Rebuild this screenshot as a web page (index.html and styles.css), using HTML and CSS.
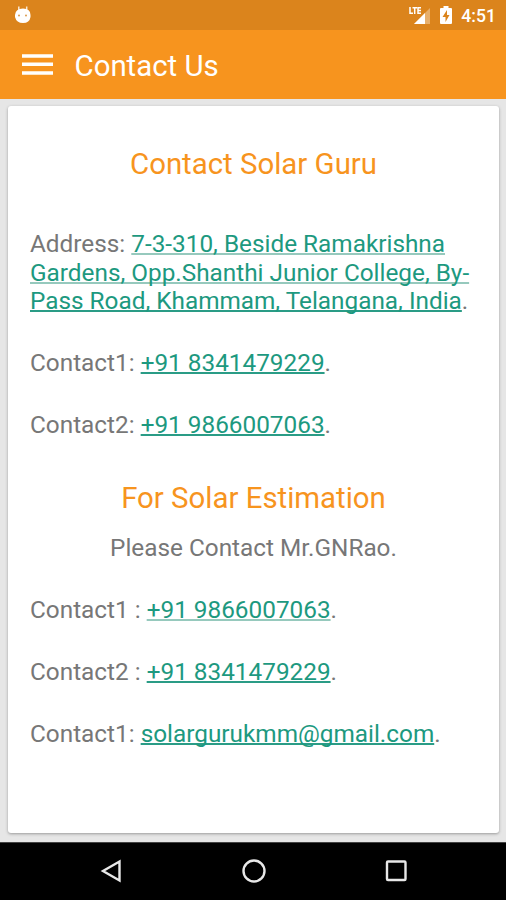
FILE: index.html
```html
<!DOCTYPE html>
<html lang="en"><head><meta charset="utf-8"><title>Contact Us</title><link rel="stylesheet" href="styles.css"></head>
<body>
<header class="status">
<svg class="droid" viewBox="0 0 18 20"><path d="M4.8 1.5V5M12.7 1.5V5" stroke="#fff" stroke-opacity=".8" stroke-width="1.5"/><path d="M1 10Q1.5 3.5 9 3.5T16.500 10V12Q15.500 18 9 18T1 12Z" fill="#fff"/><circle cx="5" cy="10.500" r="1" fill="#db9a4d"/><circle cx="12" cy="10.500" r="1" fill="#db9a4d"/></svg>
<div class="indicators">
<svg class="signal" viewBox="0 0 24 20"><path d="M6 19L22 3V19Z" fill="#fff" fill-opacity=".35"/><path d="M6 19L17 8V19Z" fill="#fff"/><path d="M2 2V8.300H5M4.500 2.700H9M6.700 2V9M13 2.700H10V8.300H13M10 5.500H13" fill="none" stroke="#fff" stroke-width="1.5"/></svg>
<svg class="battery" viewBox="0 0 12 18"><path d="M3.500 2V0H8.500V2H11Q12 2 12 3V17Q12 18 11 18H1Q0 18 0 17V3Q0 2 1 2Z" fill="#fff"/><path d="M7 4L2.500 11H5.500V16L9.500 9H7Z" fill="#db841c"/></svg>
<span class="clock">4:51</span></div>
</header>
<nav class="bar"><svg class="menu" viewBox="0 0 31 22"><path d="M0 2H31M0 10.300H31M0 19H31" stroke="#fff" stroke-width="3.600"/></svg><h1>Contact Us</h1></nav>
<main><section class="card">
<h2>Contact Solar Guru</h2>
<p class="address">Address: <a class="soft">7-3-310, Beside Ramakrishna</a><br><a class="soft">Gardens, Opp.Shanthi Junior College, By-</a><br><a>Pass Road, Khammam, Telangana, India</a>.</p>
<p>Contact1: <a>+91 8341479229</a>.</p>
<p>Contact2: <a>+91 9866007063</a>.</p>
<h2 class="second">For Solar Estimation</h2>
<p class="person">Please Contact Mr.GNRao.</p>
<p>Contact1 : <a class="soft">+91 9866007063</a>.</p>
<p>Contact2 : <a>+91 8341479229</a>.</p>
<p>Contact1: <a>solargurukmm@gmail.com</a>.</p>
</section></main>
<footer><svg viewBox="0 0 24 24"><path d="M20.500 2.500V21.500L4 12Z"/></svg><svg viewBox="0 0 24 24"><circle cx="12" cy="12" r="10.500"/></svg><svg viewBox="0 0 24 24"><rect x="3" y="2.500" width="18.500" height="18.500" rx="1"/></svg></footer>
</body></html>
```
FILE: styles.css
```css
* { box-sizing: border-box; }
body { margin: 0; height: 900px; display: flex; flex-direction: column; font-family: Roboto, sans-serif; background: #e6e6e6; color: #777; overflow: hidden; }
.status { height: 30px; background: #db841c; display: flex; justify-content: space-between; padding: 0 10px 0 14px; align-items: center; color: #fff; }
.droid { width: 18px; height: 20px; }
.indicators { display: flex; align-items: center; }
.signal { width: 24px; height: 20px; margin-right: 8px; }
.battery { width: 12px; height: 18px; margin-right: 9px; }
.clock { font-size: 17.6px; font-weight: 500; line-height: 30px; margin-top: 2px; }
.bar { height: 69px; background: #f7941e; color: #fff; display: flex; align-items: center; padding-left: 22px; }
.menu { width: 31px; height: 22px; margin-right: 21.5px; margin-top: 1px; }
h1 { margin: 3px 0 0; font-size: 29.4px; font-weight: 400; line-height: 34px; }
main { flex: 1; padding: 7px 7px 8px 8px; }
.card { height: 727px; background: #fff; border-radius: 3px; box-shadow: 0 1px 3px #999; padding: 40px 22px 0; }
h2 { margin: 0 0 47px; height: 36px; font-size: 29.4px; line-height: 36px; font-weight: 400; color: #f7941e; text-align: center; }
p { margin: 0 0 33px; font-size: 24.33px; line-height: 29px; white-space: nowrap; }
.address { line-height: 28.6px; padding-top: 1px; margin-bottom: 32.2px; }
a { color: #1d997f; text-decoration: underline; text-decoration-skip-ink: none; text-decoration-thickness: 1.500px; text-decoration-color: #2a9c86; text-underline-offset: 1px; }
a.soft { text-decoration-thickness: 2px; text-decoration-color: #96c9bd; }
h2.second { margin: 41px 0 17px; }
.person { text-align: center; }
footer { height: 58px; background: #000; border-top: 1px solid #444; display: flex; justify-content: space-between; align-items: center; padding: 0 98px 1px 99px; }
footer svg { width: 24px; height: 24px; fill: none; stroke: #e8e8e8; stroke-width: 2.4; }
```
